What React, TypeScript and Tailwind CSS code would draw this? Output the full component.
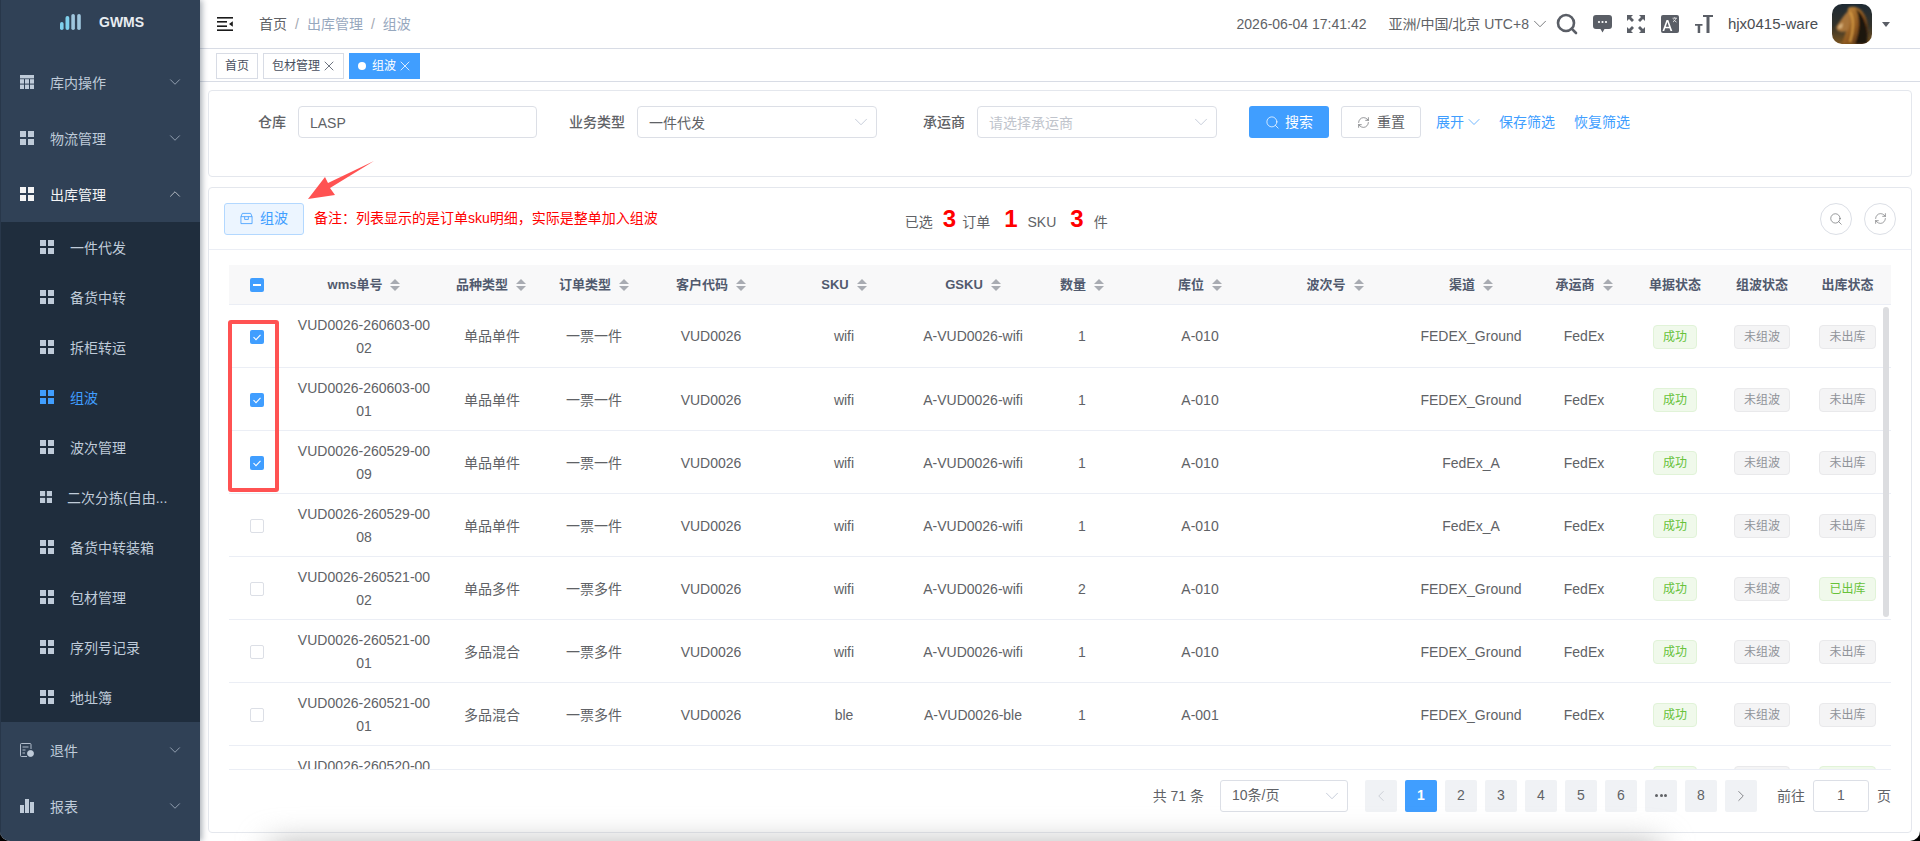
import { ChevronDown, ChevronUp, ChevronLeft, ChevronRight, Search, RefreshCw, X } from "lucide-react";

type Row = {
  no: string;
  kind: string;
  type: string;
  sku: string;
  gsku: string;
  qty: number;
  loc: string;
  channel: string;
  outbound: string;
  checked?: boolean;
};

const rows: Row[] = [
  { no: "VUD0026-260603-0002", kind: "单品单件", type: "一票一件", sku: "wifi", gsku: "A-VUD0026-wifi", qty: 1, loc: "A-010", channel: "FEDEX_Ground", outbound: "未出库", checked: true },
  { no: "VUD0026-260603-0001", kind: "单品单件", type: "一票一件", sku: "wifi", gsku: "A-VUD0026-wifi", qty: 1, loc: "A-010", channel: "FEDEX_Ground", outbound: "未出库", checked: true },
  { no: "VUD0026-260529-0009", kind: "单品单件", type: "一票一件", sku: "wifi", gsku: "A-VUD0026-wifi", qty: 1, loc: "A-010", channel: "FedEx_A", outbound: "未出库", checked: true },
  { no: "VUD0026-260529-0008", kind: "单品单件", type: "一票一件", sku: "wifi", gsku: "A-VUD0026-wifi", qty: 1, loc: "A-010", channel: "FedEx_A", outbound: "未出库" },
  { no: "VUD0026-260521-0002", kind: "单品多件", type: "一票多件", sku: "wifi", gsku: "A-VUD0026-wifi", qty: 2, loc: "A-010", channel: "FEDEX_Ground", outbound: "已出库" },
  { no: "VUD0026-260521-0001", kind: "多品混合", type: "一票多件", sku: "wifi", gsku: "A-VUD0026-wifi", qty: 1, loc: "A-010", channel: "FEDEX_Ground", outbound: "未出库" },
  { no: "VUD0026-260521-0001", kind: "多品混合", type: "一票多件", sku: "ble", gsku: "A-VUD0026-ble", qty: 1, loc: "A-001", channel: "FEDEX_Ground", outbound: "未出库" },
  { no: "VUD0026-260520-0001", kind: "单品单件", type: "一票一件", sku: "wifi", gsku: "A-VUD0026-wifi", qty: 1, loc: "A-010", channel: "FEDEX_Ground", outbound: "已出库" },
];

const children = ["一件代发", "备货中转", "拆柜转运", "组波", "波次管理", "二次分拣(自由...", "备货中转装箱", "包材管理", "序列号记录", "地址簿"];

function GridIcon({ className }: { className: string }) {
  return (
    <svg viewBox="0 0 14 14" className={className} fill="currentColor">
      <rect x="0" y="0" width="6" height="6" />
      <rect x="8" y="0" width="6" height="6" />
      <rect x="0" y="8" width="6" height="6" />
      <rect x="8" y="8" width="6" height="6" />
    </svg>
  );
}

function TableIcon() {
  return (
    <svg viewBox="0 0 14 14" className="w-[14px] h-[14px]" fill="currentColor">
      <rect x="0" y="0" width="14" height="3.4" />
      <rect x="0" y="4.2" width="4" height="4.4" />
      <rect x="5" y="4.2" width="4" height="4.4" />
      <rect x="10" y="4.2" width="4" height="4.4" />
      <rect x="0" y="9.6" width="4" height="4.4" />
      <rect x="5" y="9.6" width="4" height="4.4" />
      <rect x="10" y="9.6" width="4" height="4.4" />
    </svg>
  );
}

function ReturnIcon() {
  return (
    <svg viewBox="0 0 14 14" className="w-[14px] h-[14px]" fill="none" stroke="currentColor" strokeWidth="0.9">
      <path d="M11 6V1.500a1 1 0 0 0-1-1H1.500a1 1 0 0 0-1 1v11a1 1 0 0 0 1 1H7" />
      <path d="M2.500 4h6M2.500 7h3M2.500 10h2.500" />
      <circle cx="10.500" cy="10.500" r="3" fill="currentColor" />
    </svg>
  );
}

function ChartIcon() {
  return (
    <svg viewBox="0 0 14 14" className="w-[14px] h-[14px]" fill="currentColor">
      <rect x="0" y="6" width="4" height="8" />
      <rect x="5" y="0" width="4" height="14" />
      <rect x="10" y="3" width="4" height="11" />
    </svg>
  );
}

function SideParent({ icon, label, open, active }: { icon: React.ReactNode; label: string; open?: boolean; active?: boolean }) {
  return (
    <div className={`h-[56px] flex items-center pl-[19px] pr-[16px] text-[14px] ${active ? "text-[#f4f4f5]" : "text-[#bfcbd9]"}`}>
      <span className="w-[14px] mr-[16px]">{icon}</span>
      <span className="flex-1 pt-[2px]">{label}</span>
      {open ? <ChevronUp size={18} strokeWidth={0.9} /> : <ChevronDown size={18} strokeWidth={0.9} />}
    </div>
  );
}

function Sidebar() {
  return (
    <aside className="w-[200px] shrink-0 bg-[#304156] border-l border-[#28374a] shadow-[2px_0_6px_rgba(0,21,41,0.35)] z-10 flex flex-col">
      <div className="h-[54px] pb-[10px] flex items-center pl-[59px]">
        <svg viewBox="0 0 21 16" className="w-[21px] h-[16px]">
          <rect x="0" y="8" width="3.600" height="8" rx="1.800" fill="#7fd0ec" />
          <rect x="5.500" y="2" width="3.800" height="14" rx="1.900" fill="#7fd0ec" />
          <rect x="11.300" y="0" width="3.600" height="16" rx="1.800" fill="#9fc6de" />
          <rect x="17.200" y="0" width="3.600" height="16" rx="1.800" fill="#9fc6de" />
        </svg>
        <span className="ml-[18px] text-[14px] font-semibold text-[#e8edf2]">GWMS</span>
      </div>
      <SideParent icon={<TableIcon />} label="库内操作" />
      <SideParent icon={<GridIcon className="w-[14px] h-[14px]" />} label="物流管理" />
      <SideParent icon={<GridIcon className="w-[14px] h-[14px]" />} label="出库管理" open active />
      <div className="bg-[#1f2d3d]">
        {children.map((c) => {
          const small = c.startsWith("二次");
          const active = c === "组波";
          return (
            <div key={c} className={`h-[50px] flex items-center text-[14px] pl-[39px] ${active ? "text-[#409eff]" : "text-[#bfcbd9]"}`}>
              <GridIcon className={small ? "w-[12px] h-[12px] mr-[16px]" : "w-[14px] h-[14px] mr-[16px]"} />
              <span className={small ? "-ml-[1px] pt-[2px]" : "pt-[2px]"}>{c}</span>
            </div>
          );
        })}
      </div>
      <SideParent icon={<ReturnIcon />} label="退件" />
      <SideParent icon={<ChartIcon />} label="报表" />
    </aside>
  );
}

function Avatar() {
  return (
    <svg viewBox="0 0 40 40" className="w-[40px] h-[40px] rounded-[10px]">
      <defs>
        <linearGradient id="lionBg" x1="0" y1="0" x2="0" y2="1">
          <stop offset="0" stopColor="#1e2a33" />
          <stop offset="0.55" stopColor="#33322a" />
          <stop offset="1" stopColor="#7a5420" />
        </linearGradient>
        <linearGradient id="lionMane" x1="0" y1="0" x2="1" y2="1">
          <stop offset="0" stopColor="#c99040" />
          <stop offset="0.55" stopColor="#8f5820" />
          <stop offset="1" stopColor="#2e1c0e" />
        </linearGradient>
        <filter id="lionSoft">
          <feGaussianBlur stdDeviation="0.8" />
        </filter>
      </defs>
      <rect width="40" height="40" fill="url(#lionBg)" />
      <g filter="url(#lionSoft)">
        <path d="M16 4 C24 0 31 6 34 14 C37 24 36 33 34 40 L10 40 C12 34 13 30 14 27 Z" fill="url(#lionMane)" />
        <path d="M4 23 C7 19 11 12 16 7 C19 11 18 20 16 26 C12 29 7 28 5 26 Z" fill="#a8743a" />
        <path d="M7 21 L11 19 L10 24 L6 25 Z" fill="#d8b27c" />
        <path d="M24 5 C32 10 37 24 35 40 L23 40 C28 28 28 14 24 5 Z" fill="#1c130d" />
        <path d="M18 8 C22 14 22 26 18 38" stroke="#e0a448" strokeWidth="1.5" fill="none" />
      </g>
    </svg>
  );
}

function Navbar() {
  return (
    <div className="h-[49px] shrink-0 border-b border-[#d8dce5] flex items-center pl-[17px] pr-[30px] bg-white">
      <svg viewBox="0 0 16 14" className="w-[16px] h-[14px]" fill="#1a1a1a">
        <rect x="0" y="0" width="16" height="1.600" />
        <rect x="0" y="4" width="10" height="1.600" />
        <rect x="0" y="8.400" width="10" height="1.600" />
        <rect x="0" y="12.400" width="16" height="1.600" />
        <path d="M15.800 4.200v5.600L12 7z" />
      </svg>
      <div className="ml-[26px] flex items-center text-[14px] text-[#97a8be]">
        <span className="text-[#606266]">首页</span>
        <span className="mx-[8px] text-[#a3a8b1]">/</span>
        <span>出库管理</span>
        <span className="mx-[8px] text-[#a3a8b1]">/</span>
        <span>组波</span>
      </div>
      <div className="flex-1" />
      <span className="text-[14px] text-[#606266]">2026-06-04 17:41:42</span>
      <span className="ml-[22px] text-[14px] text-[#606266]">亚洲/中国/北京 UTC+8</span>
      <ChevronDown size={22} strokeWidth={0.9} className="text-[#606266]" />
      <Search size={24} strokeWidth={2.6} className="ml-[4px] text-[#5a5e66]" />
      <svg viewBox="0 0 19 18" className="ml-[14px] w-[19px] h-[18px]" fill="#5a5e66">
        <path d="M3 0h13a3 3 0 0 1 3 3v8a3 3 0 0 1-3 3h-4.500L9.500 17.500 7.500 14H3a3 3 0 0 1-3-3V3a3 3 0 0 1 3-3z" />
        <circle cx="6" cy="7" r="1.100" fill="#fff" />
        <circle cx="9.500" cy="7" r="1.100" fill="#fff" />
        <circle cx="13" cy="7" r="1.100" fill="#fff" />
      </svg>
      <svg viewBox="0 0 18 18" className="ml-[15px] w-[18px] h-[18px]" fill="#5a5e66">
        <path d="M0 0h6L4 2l3 3-2 2-3-3-2 2zM18 0v6l-2-2-3 3-2-2 3-3-2-2zM0 18v-6l2 2 3-3 2 2-3 3 2 2zM18 18h-6l2-2-3-3 2-2 3 3 2-2z" />
      </svg>
      <svg viewBox="0 0 18 18" className="ml-[16px] w-[18px] h-[18px]">
        <rect width="18" height="18" rx="2" fill="#5a5e66" />
        <path d="M1.500 16L5.500 5h1.800l4 11H9.500l-1-2.800H4.200L3.200 16zM4.800 11.700h3.200L6.400 7z" fill="#fff" />
        <path d="M11.500 3.200h4.500M13.700 2.200v1M12 7c1.500-1 2.500-2.300 3-3.800M12.500 4.500c.7 1.200 1.700 2 3 2.600" stroke="#fff" strokeWidth="0.7" fill="none" />
      </svg>
      <svg viewBox="0 0 18 18" className="ml-[16px] w-[18px] h-[18px]" fill="#5a5e66">
        <path d="M8 0h10v2h-3.500v16h-3V2H8z" />
        <path d="M0 9h7.500v1.800H5.200V18H2.700v-7.200H0z" />
      </svg>
      <span className="ml-[15px] text-[15px] text-[#4a4d52]">hjx0415-ware</span>
      <span className="ml-[14px]"><Avatar /></span>
      <span className="ml-[10px] w-0 h-0 border-x-[4px] border-x-transparent border-t-[5px] border-t-[#5a5e66]" />
    </div>
  );
}

function TagsBar() {
  return (
    <div className="h-[33px] shrink-0 border-b border-[#d8dce5] flex items-center gap-[5px] pl-[16px] pt-[2px] text-[12px] text-[#495060]">
      <span className="h-[26px] px-[8px] flex items-center border border-[#d8dce5]">首页</span>
      <span className="h-[26px] pl-[8px] pr-[6px] flex items-center border border-[#d8dce5]">
        包材管理
        <X size={16} strokeWidth={1.2} className="ml-[1px]" />
      </span>
      <span className="h-[26px] pl-[9px] pr-[7px] flex items-center bg-[#409eff] text-white">
        <span className="w-[8px] h-[8px] rounded-full bg-white mr-[6px]" />
        组波
        <X size={16} strokeWidth={1.2} className="ml-[1px]" />
      </span>
    </div>
  );
}

function FieldLabel({ children, className }: { children: React.ReactNode; className: string }) {
  return <label className={`text-[14px] text-[#606266] font-medium ${className}`}>{children}</label>;
}

function FilterCard() {
  return (
    <div className="h-[87px] shrink-0 border border-[#e4e7ed] rounded-[4px] pt-[15px] flex items-start pl-[49px] bg-white">
      <div className="h-[32px] flex items-center">
        <FieldLabel className="w-[28px]">仓库</FieldLabel>
        <div className="ml-[12px] w-[239px] h-[32px] border border-[#dcdfe6] rounded-[4px] flex items-center px-[11px] pt-[2px] text-[14px] text-[#606266]">LASP</div>
      </div>
      <div className="ml-[32px] h-[32px] flex items-center">
        <FieldLabel className="w-[56px]">业务类型</FieldLabel>
        <div className="ml-[12px] w-[240px] h-[32px] border border-[#dcdfe6] rounded-[4px] flex items-center justify-between px-[11px] text-[14px] text-[#606266]">
          <span className="pt-[2px]">一件代发</span>
          <ChevronDown size={22} strokeWidth={0.8} className="-mr-[7px] text-[#b4bccc]" />
        </div>
      </div>
      <div className="ml-[46px] h-[32px] flex items-center">
        <FieldLabel className="w-[42px]">承运商</FieldLabel>
        <div className="ml-[12px] w-[240px] h-[32px] border border-[#dcdfe6] rounded-[4px] flex items-center justify-between px-[11px] text-[14px] text-[#c0c4cc]">
          <span className="pt-[2px]">请选择承运商</span>
          <ChevronDown size={22} strokeWidth={0.8} className="-mr-[7px] text-[#b4bccc]" />
        </div>
      </div>
      <button className="ml-[32px] w-[80px] h-[32px] rounded-[3px] bg-[#409eff] text-white text-[14px] flex items-center justify-center gap-[5px]">
        <Search size={15} strokeWidth={1.2} />
        搜索
      </button>
      <button className="ml-[12px] w-[80px] h-[32px] rounded-[3px] border border-[#dcdfe6] text-[#606266] text-[14px] flex items-center justify-center gap-[7px]">
        <RefreshCw size={13} strokeWidth={1.2} />
        重置
      </button>
      <div className="ml-[15px] h-[32px] flex items-center text-[14px] text-[#409eff]">
        展开
        <ChevronDown size={20} strokeWidth={0.9} />
        <span className="ml-[15px]">保存筛选</span>
        <span className="ml-[19px]">恢复筛选</span>
      </div>
    </div>
  );
}

function Caret() {
  return (
    <span className="inline-flex flex-col gap-[2px] ml-[8px] align-middle">
      <span className="w-0 h-0 border-x-[5px] border-x-transparent border-b-[5px] border-b-[#a8abb2]" />
      <span className="w-0 h-0 border-x-[5px] border-x-transparent border-t-[5px] border-t-[#a8abb2]" />
    </span>
  );
}

function Badge({ text, tone }: { text: string; tone: "green" | "gray" }) {
  const cls = tone === "green" ? "bg-[#f0f9eb] border-[#e1f3d8] text-[#67c23a]" : "bg-[#f4f4f5] border-[#e9e9eb] text-[#909399]";
  return <span className={`inline-flex items-center h-[24px] px-[9px] rounded-[4px] border text-[12px] ${cls}`}>{text}</span>;
}

function Checkbox({ state }: { state: "on" | "off" | "half" }) {
  if (state === "off") return <span className="inline-block w-[14px] h-[14px] rounded-[2px] border border-[#dcdfe6] bg-white align-middle" />;
  return (
    <span className="inline-flex items-center justify-center w-[14px] h-[14px] rounded-[2px] bg-[#409eff] align-middle">
      {state === "half" ? (
        <span className="w-[8px] h-[2px] bg-white" />
      ) : (
        <svg viewBox="0 0 14 14" className="w-[14px] h-[14px]" fill="none" stroke="#fff" strokeWidth="1.1">
          <path d="M3.500 7.200l2.500 2.400 4.500-4.800" />
        </svg>
      )}
    </span>
  );
}

const headers: { text: string; sort: boolean; cls?: string }[] = [
  { text: "wms单号", sort: true },
  { text: "品种类型", sort: true, cls: "pl-[4px]" },
  { text: "订单类型", sort: true },
  { text: "客户代码", sort: true },
  { text: "SKU", sort: true },
  { text: "GSKU", sort: true },
  { text: "数量", sort: true },
  { text: "库位", sort: true },
  { text: "波次号", sort: true },
  { text: "渠道", sort: true },
  { text: "承运商", sort: true },
  { text: "单据状态", sort: false },
  { text: "组波状态", sort: false },
  { text: "出库状态", sort: false },
];

function Cols() {
  return (
    <colgroup>
      <col className="w-[59px]" />
      <col className="w-[152px]" />
      <col className="w-[98px]" />
      <col className="w-[112px]" />
      <col className="w-[122px]" />
      <col className="w-[144px]" />
      <col className="w-[114px]" />
      <col className="w-[104px]" />
      <col className="w-[132px]" />
      <col className="w-[138px]" />
      <col className="w-[134px]" />
      <col className="w-[92px]" />
      <col className="w-[90px]" />
      <col className="w-[84px]" />
      <col className="w-[87px]" />
    </colgroup>
  );
}

function DataTable() {
  return (
    <div className="ml-[20px] mr-[20px] mt-[15px] relative">
      <table className="table-fixed w-[1662px] border-collapse">
        <Cols />
        <thead>
          <tr className="h-[39px] bg-[#f8f8f9] border-b border-[#ebeef5]">
            <th className="pr-[3px] text-center">
              <Checkbox state="half" />
            </th>
            {headers.map((h) => (
              <th key={h.text} className={`text-center text-[13px] font-semibold text-[#515a6e] whitespace-nowrap ${h.cls ?? ""}`}>
                {h.text}
                {h.sort && <Caret />}
              </th>
            ))}
          </tr>
        </thead>
      </table>
      <div className="h-[465px] overflow-hidden border-b border-[#ebeef5]">
        <table className="table-fixed w-[1662px] border-collapse">
          <Cols />
          <tbody>
            {rows.map((r, i) => (
              <tr key={i} className="h-[63px] border-b border-[#ebeef5] text-[14px] text-[#606266] text-center whitespace-nowrap [&>td:not(:first-child)]:pt-[2px]">
                <td className="pr-[3px]">
                  <Checkbox state={r.checked ? "on" : "off"} />
                </td>
                <td className="px-[9px] leading-[23px] break-all whitespace-normal">{r.no}</td>
                <td className="pl-[6px]">{r.kind}</td>
                <td>{r.type}</td>
                <td>VUD0026</td>
                <td>{r.sku}</td>
                <td>{r.gsku}</td>
                <td>{r.qty}</td>
                <td>{r.loc}</td>
                <td></td>
                <td>{r.channel}</td>
                <td>FedEx</td>
                <td><Badge text="成功" tone="green" /></td>
                <td><Badge text="未组波" tone="gray" /></td>
                <td><Badge text={r.outbound} tone={r.outbound === "已出库" ? "green" : "gray"} /></td>
              </tr>
            ))}
          </tbody>
        </table>
      </div>
      <span className="absolute right-[2px] top-[42px] w-[6px] h-[310px] rounded-full bg-[#dcdde0]" />
    </div>
  );
}

function Pager() {
  const pageCls = "w-[32px] h-[32px] rounded-[2px] bg-[#f0f2f5] flex items-center justify-center text-[14px] text-[#606266]";
  return (
    <div className="flex-1 flex items-start justify-end pt-[10px] pr-[20px] text-[14px] text-[#606266]">
      <span className="mt-[6px]">共 71 条</span>
      <div className="ml-[16px] w-[128px] h-[32px] border border-[#dcdfe6] rounded-[3px] flex items-center justify-between px-[11px]">
        10条/页
        <ChevronDown size={22} strokeWidth={0.8} className="-mr-[7px] text-[#b4bccc]" />
      </div>
      <div className="ml-[17px] flex gap-[8px]">
        <span className={pageCls}><ChevronLeft size={18} strokeWidth={1} className="text-[#c0c4cc]" /></span>
        <span className="w-[32px] h-[32px] rounded-[2px] bg-[#409eff] text-white flex items-center justify-center font-semibold">1</span>
        {["2", "3", "4", "5", "6"].map((p) => (
          <span key={p} className={pageCls}>{p}</span>
        ))}
        <span className={`${pageCls} gap-[1.5px]`}>
          <span className="w-[3px] h-[3px] rounded-full bg-[#606266]" />
          <span className="w-[3px] h-[3px] rounded-full bg-[#606266]" />
          <span className="w-[3px] h-[3px] rounded-full bg-[#606266]" />
        </span>
        <span className={pageCls}>8</span>
        <span className={pageCls}><ChevronRight size={18} strokeWidth={1} /></span>
      </div>
      <span className="ml-[20px] mt-[6px]">前往</span>
      <div className="ml-[8px] w-[56px] h-[32px] border border-[#dcdfe6] rounded-[3px] flex items-center justify-center">1</div>
      <span className="ml-[8px] mt-[6px]">页</span>
    </div>
  );
}

function ActionBar() {
  return (
    <div className="h-[62px] shrink-0 border-b border-[#ebeef5] flex items-center pl-[15px] pr-[15px] -mt-[1px]">
      <button className="w-[80px] h-[32px] rounded-[3px] border border-[#b3d8ff] bg-[#ecf5ff] text-[#409eff] text-[14px] flex items-center justify-center gap-[7px]">
        <svg viewBox="0 0 14 14" className="w-[13px] h-[13px]" fill="none" stroke="currentColor" strokeWidth="0.9">
          <path d="M1 5l1.500-3.500h9L13 5v7.500H1zM1 5h12M5 5v3h4V5" />
        </svg>
        组波
      </button>
      <span className="ml-[10px] text-[14px] text-[#ff0000]">备注：列表显示的是订单sku明细，实际是整单加入组波</span>
      <div className="ml-[247px] flex items-baseline text-[14px] text-[#606266]">
        已选
        <b className="ml-[10px] text-[24px] text-[#ff0000]">3</b>
        <span className="ml-[6px]">订单</span>
        <b className="ml-[14px] text-[24px] text-[#ff0000]">1</b>
        <span className="ml-[10px]">SKU</span>
        <b className="ml-[14px] text-[24px] text-[#ff0000]">3</b>
        <span className="ml-[10px]">件</span>
      </div>
      <div className="flex-1" />
      <span className="w-[32px] h-[32px] rounded-full border border-[#dcdfe6] flex items-center justify-center text-[#606266]">
        <Search size={14} strokeWidth={1.1} />
      </span>
      <span className="ml-[12px] w-[32px] h-[32px] rounded-full border border-[#dcdfe6] flex items-center justify-center text-[#606266]">
        <RefreshCw size={13} strokeWidth={1.1} />
      </span>
    </div>
  );
}

export default function App() {
  return (
    <div className="w-[1920px] h-[841px] bg-black overflow-hidden font-['Liberation_Sans','Noto_Sans_CJK_SC',sans-serif]">
      <div className="relative w-full h-full bg-white rounded-b-[10px] overflow-hidden flex">
        <Sidebar />
        <div className="flex-1 flex flex-col min-w-0">
          <Navbar />
          <TagsBar />
          <div className="flex-1 flex flex-col pl-[8px] pr-[8px] pt-[8px] pb-[8px] gap-[10px]">
            <FilterCard />
            <div className="flex-1 border border-[#e4e7ed] rounded-[4px] flex flex-col bg-white pt-[1px]">
              <ActionBar />
              <DataTable />
              <Pager />
            </div>
          </div>
        </div>

        {/* annotations drawn on top of the screenshot */}
        <svg viewBox="0 0 90 50" className="absolute left-[300px] top-[155px] w-[90px] h-[50px]">
          <path d="M74 6 L28 28 L25 22 L8 44 L35 40 L30 33 Z" fill="#ff5252" />
        </svg>
        <span className="absolute left-[228px] top-[320px] w-[51px] h-[172px] border-[4px] border-[#ff5252] rounded-[3px]" />
        <span className="absolute left-[270px] right-[260px] bottom-[-64px] h-[60px] bg-[#aaaaaa] blur-[16px]" />
      </div>
    </div>
  );
}
